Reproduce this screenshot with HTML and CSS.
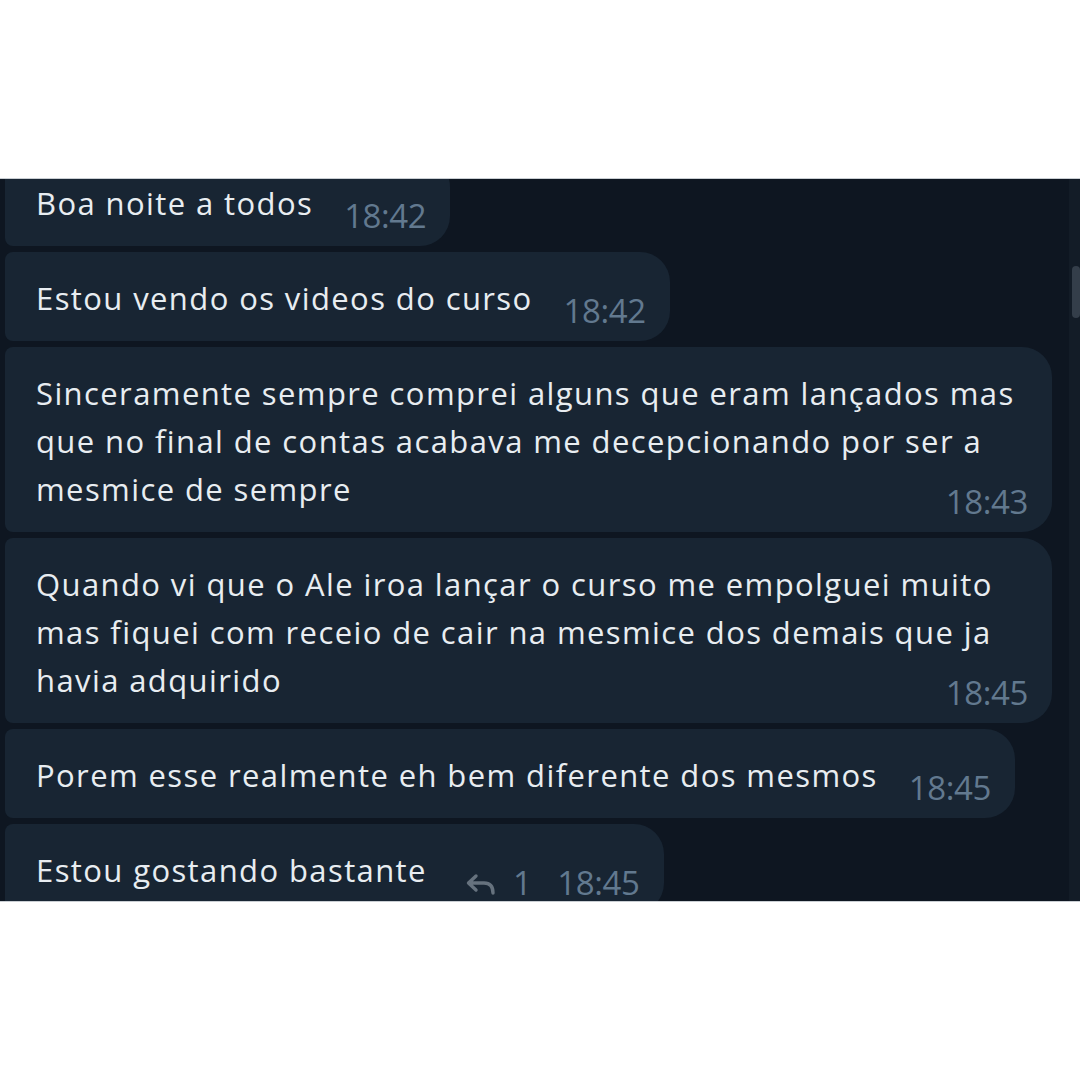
FILE: index.html
```html
<!DOCTYPE html>
<html lang="pt-BR">
<head>
  <meta charset="UTF-8">
  <title>chat</title>
  <link rel="stylesheet" href="styles.css">
</head>
<body>
  <div class="chat">
    <div class="messages">
      <div class="bubble">
        <span class="text">Boa noite a todos</span>
        <span class="meta">18:42</span>
      </div>
      <div class="bubble">
        <span class="text">Estou vendo os videos do curso</span>
        <span class="meta">18:42</span>
      </div>
      <div class="bubble">
        <span class="text">Sinceramente sempre comprei alguns que eram lançados mas que no final de contas acabava me decepcionando por ser a mesmice de sempre</span>
        <span class="meta">18:43</span>
      </div>
      <div class="bubble">
        <span class="text">Quando vi que o Ale iroa lançar o curso me empolguei muito mas fiquei com receio de cair na mesmice dos demais que ja havia adquirido</span>
        <span class="meta">18:45</span>
      </div>
      <div class="bubble">
        <span class="text">Porem esse realmente eh bem diferente dos mesmos</span>
        <span class="meta">18:45</span>
      </div>
      <div class="bubble">
        <span class="text">Estou gostando bastante</span>
        <span class="meta meta-replies">
          <svg class="reply-icon" viewBox="0 0 32 22" width="32" height="22">
            <path d="M11 3 L3.5 10 L11 17 M3.5 10 H19 Q28 10 28 20" fill="none" stroke="#66727e" stroke-width="3.4" stroke-linecap="round" stroke-linejoin="round"/>
          </svg>
          <span class="count">1</span>
          18:45
        </span>
      </div>
    </div>
    <div class="scrollbar">
      <div class="thumb"></div>
    </div>
  </div>
</body>
</html>
```

FILE: styles.css
```css
body {
  margin: 0;
  background: #ffffff;
  font-family: 'Open Sans', sans-serif;
}

.chat {
  margin-top: 178px;
  height: 724px;
  display: flex;
  overflow: hidden;
  background: #0e1621;
  border-top: 1px solid #c9ced3;
  border-bottom: 1px solid #c9ced3;
  box-sizing: border-box;
}

.messages {
  flex: 1;
  display: flex;
  flex-direction: column;
  align-items: flex-start;
  gap: 6px;
  padding-left: 5px;
  margin-top: -22px;
}

.bubble {
  max-width: 992px;
  padding: 22px 24px 6px 31px;
  background: #182533;
  border-radius: 8px 30px 30px 8px;
  color: #e8edf1;
  font-size: 31px;
  line-height: 48px;
  letter-spacing: 1.4px;
}

.meta {
  float: right;
  margin: 13px 0 0 31px;
  font-size: 33px;
  letter-spacing: -0.4px;
  line-height: 48px;
  color: #62798f;
}

.meta-replies {
  margin-left: 38px;
  display: flex;
  align-items: center;
}

.reply-icon {
  margin-right: 16px;
  margin-top: 2px;
}

.count {
  margin-right: 26px;
}

.scrollbar {
  width: 11px;
  background: #131c27;
}

.thumb {
  margin: 87px 0 0 3px;
  width: 8px;
  height: 52px;
  border-radius: 4px;
  background: #343e4a;
}
```
